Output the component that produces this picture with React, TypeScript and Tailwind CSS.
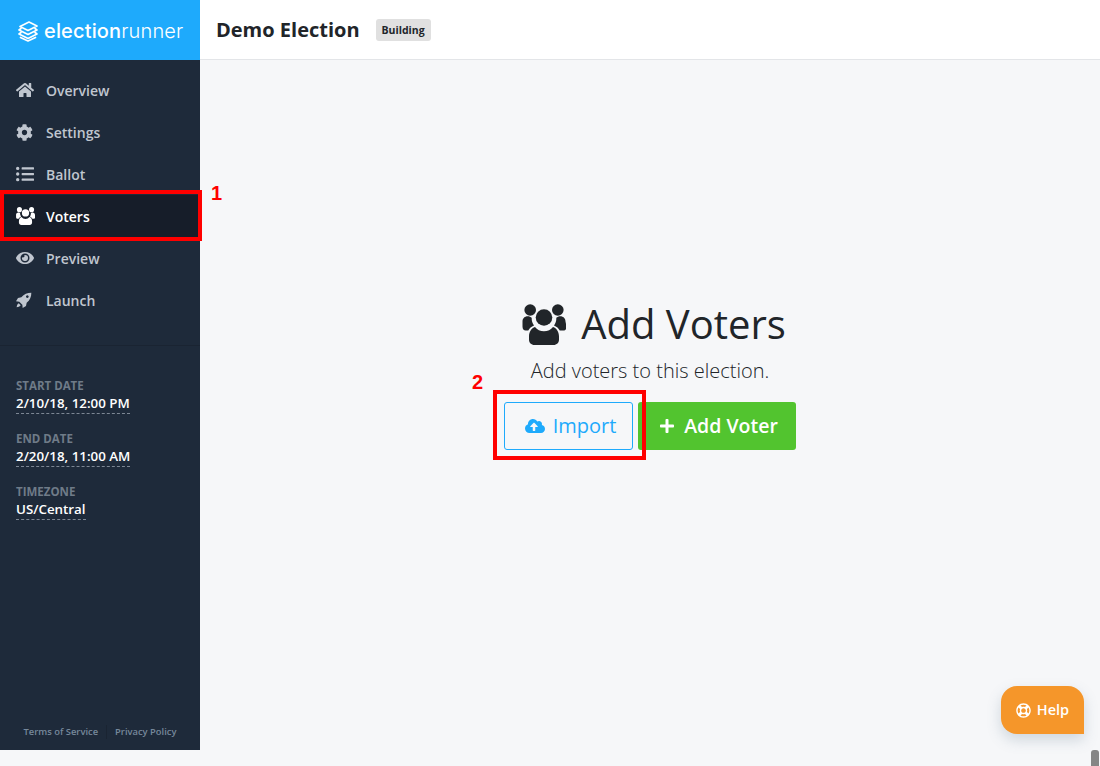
import { FaHome, FaCog, FaListUl, FaEye, FaCloudUploadAlt, FaPlus, FaRegLifeRing } from 'react-icons/fa';

function UsersIcon({ className }: { className?: string }) {
  return (
    <svg viewBox="0 0 43 41" fill="currentColor" className={className}>
      <circle cx="7.700" cy="6" r="5.800" />
      <circle cx="35.300" cy="6" r="5.800" />
      <circle cx="21.500" cy="13.500" r="8.300" />
      <path d="M0 17.500c0-3 2.200-5.200 5.200-5.200 1.600 0 3 .6 4 1.500-.2 3 .8 5.700 2.300 7.700-2.600 1-4.600 2.700-5.700 5H3.200C1.200 26.500 0 25 0 22.500z" />
      <path d="M43 17.500c0-3-2.200-5.200-5.200-5.200-1.600 0-3 .6-4 1.500.2 3-.8 5.700-2.300 7.700 2.600 1 4.600 2.700 5.700 5h3.600c2 0 3.200-1.500 3.200-4z" />
      <path d="M12.500 23c2 2.800 5.400 4.300 9 4.300s7-1.500 9-4.300c3.600 1.200 6 4.700 6 9.500v3c0 3.200-2.200 5.500-5.500 5.500H12c-3.300 0-5.500-2.300-5.500-5.500v-3c0-4.800 2.400-8.300 6-9.500z" />
    </svg>
  );
}

function RocketIcon({ className }: { className?: string }) {
  return (
    <svg viewBox="0 0 24 24" fill="currentColor" className={className}>
      <path
        fillRule="evenodd"
        d="M23 1c-6 0-11 2-15 7L3 9l-3 5 5 .5 4.500 4.500.5 5 5-3 1-5c5-4 7-9 7-15zM17 5a2 2 0 1 0 .01 0z"
      />
      <path d="M4 17c-2 1-3 4-3 6 2 0 5-1 6-3z" />
    </svg>
  );
}

const NAV = [
  { label: 'Overview', icon: <FaHome className="text-[18px]" /> },
  { label: 'Settings', icon: <FaCog className="text-[17px]" /> },
  { label: 'Ballot', icon: <FaListUl className="text-[18px]" /> },
  { label: 'Voters', icon: <UsersIcon className="h-[18px] w-[19px]" />, active: true },
  { label: 'Preview', icon: <FaEye className="text-[18px]" /> },
  { label: 'Launch', icon: <RocketIcon className="h-[16px] w-[16px]" /> },
];

const META = [
  { label: 'START DATE', value: '2/10/18, 12:00 PM' },
  { label: 'END DATE', value: '2/20/18, 11:00 AM' },
  { label: 'TIMEZONE', value: 'US/Central' },
];

function LogoMark() {
  return (
    <svg width="22" height="21" viewBox="0 0 22 21" fill="none" stroke="#fff" strokeWidth="1.700" strokeLinejoin="round" strokeLinecap="round">
      <path d="M12 1 20 5l-9 4.500L3 5.500z" />
      <path d="M4 7.500 2 9l9 4.500L20 9l-2-1.500" />
      <path d="M4 11.500 2 13l9 4.500 9-4.500-2-1.500" />
      <path d="M3.500 16.500 11 20l7.500-3.500" />
    </svg>
  );
}

export default function App() {
  return (
    <div className="relative h-[766px] overflow-hidden bg-[#f6f7f9] font-['Open_Sans',sans-serif]">
      <div className="flex h-[750px]">
        <aside className="flex w-[200px] shrink-0 flex-col bg-[#1e2a3a]">
          <div className="flex h-[60px] items-center gap-[5px] bg-[#1eaafc] pl-[17px] pt-[2px]">
            <LogoMark />
            <span className="font-['Inter',sans-serif] text-[20px] font-medium leading-none tracking-[0.15px] text-white">
              election<span className="font-light">runner</span>
            </span>
          </div>

          <nav className="border-b border-[#1a2432] pb-[24px] pt-[9px]">
            {NAV.map(item => (
              <div
                key={item.label}
                className={`flex h-[42px] items-center pl-[16px] text-[14px] font-semibold ${
                  item.active ? 'bg-[#161d29] text-white' : 'text-[#c0c6cf]'
                }`}
              >
                <span className="flex w-[30px] shrink-0 items-center">{item.icon}</span>
                {item.label}
              </div>
            ))}
          </nav>

          <div className="flex flex-col gap-[17px] pl-[16px] pt-[32px]">
            {META.map(m => (
              <div key={m.label} className="flex flex-col items-start">
                <div className="text-[11.5px] font-bold leading-[16px] text-[#6f7b88]">{m.label}</div>
                <div className="border-b border-dashed border-[#7d8794] text-[13.35px] font-semibold leading-[19px] text-white">
                  {m.value}
                </div>
              </div>
            ))}
          </div>

          <div className="mt-auto flex h-[36px] items-center justify-center text-[9.4px] font-semibold text-[#76889b]">
            <span className="pr-[8px]">Terms of Service</span>
            <span className="border-l border-[#1a2432] pl-[8px]">Privacy Policy</span>
          </div>
        </aside>

        <div className="flex min-w-0 flex-1 flex-col">
          <header className="flex h-[60px] shrink-0 items-center border-b border-[#e3e5e8] bg-white pl-[16px]">
            <h1 className="text-[20px] font-bold text-[#212529]">Demo Election</h1>
            <span className="ml-[16px] rounded-[3px] bg-[#e0e0e0] px-[6px] py-[3px] text-[10.5px] font-bold leading-[16px] text-[#212529]">
              Building
            </span>
          </header>

          <main className="flex flex-1 flex-col items-center pt-[236px]">
            <div className="flex items-center gap-[15px] pl-[8px] text-[#212529]">
              <UsersIcon className="h-[41px] w-[44px]" />
              <h2 className="text-[40px] font-normal leading-[56px]">Add Voters</h2>
            </div>
            <p className="mt-[5px] text-[20px] font-light leading-[28px] text-[#212529]">Add voters to this election.</p>
            <div className="mt-[17px] flex gap-[5px]">
              <button
                type="button"
                className="flex h-[48px] w-[129px] items-center justify-center gap-[8px] rounded-[3px] border border-[#1eaafc] pl-[4px] text-[20px] text-[#1eaafc]"
              >
                <FaCloudUploadAlt className="text-[20px]" />
                Import
              </button>
              <button
                type="button"
                className="flex h-[48px] w-[158px] items-center justify-center gap-[9px] rounded-[3px] bg-[#52c42f] pl-[3px] text-[19.5px] font-semibold text-white"
              >
                <FaPlus className="text-[16px]" />
                Add Voter
              </button>
            </div>
          </main>
        </div>
      </div>

      {/* annotations sit over the page */}
      <div className="absolute left-0 top-[190px] h-[51px] w-[202px] border-[4px] border-[#ff0000]" />
      <div className="absolute left-[211px] top-[182px] font-['Liberation_Sans',sans-serif] text-[20px] font-bold leading-[23px] text-[#ff0000]">1</div>
      <div className="absolute left-[493px] top-[390px] h-[70px] w-[153px] border-[4px] border-[#ff0000]" />
      <div className="absolute left-[472px] top-[371px] font-['Liberation_Sans',sans-serif] text-[20px] font-bold leading-[23px] text-[#ff0000]">2</div>

      <div className="absolute left-[1001px] top-[686px] flex h-[48px] w-[83px] items-center justify-center gap-[6px] rounded-[16px] rounded-br-none bg-[#f5962a] text-[14.5px] font-semibold text-white shadow-[0_6px_14px_rgba(90,120,140,0.25)]">
        <FaRegLifeRing className="text-[15px]" />
        Help
      </div>

      <div className="absolute left-[1091px] top-[750px] h-[16px] w-[8px] rounded-t-[3px] bg-[#858585]" />
    </div>
  );
}
